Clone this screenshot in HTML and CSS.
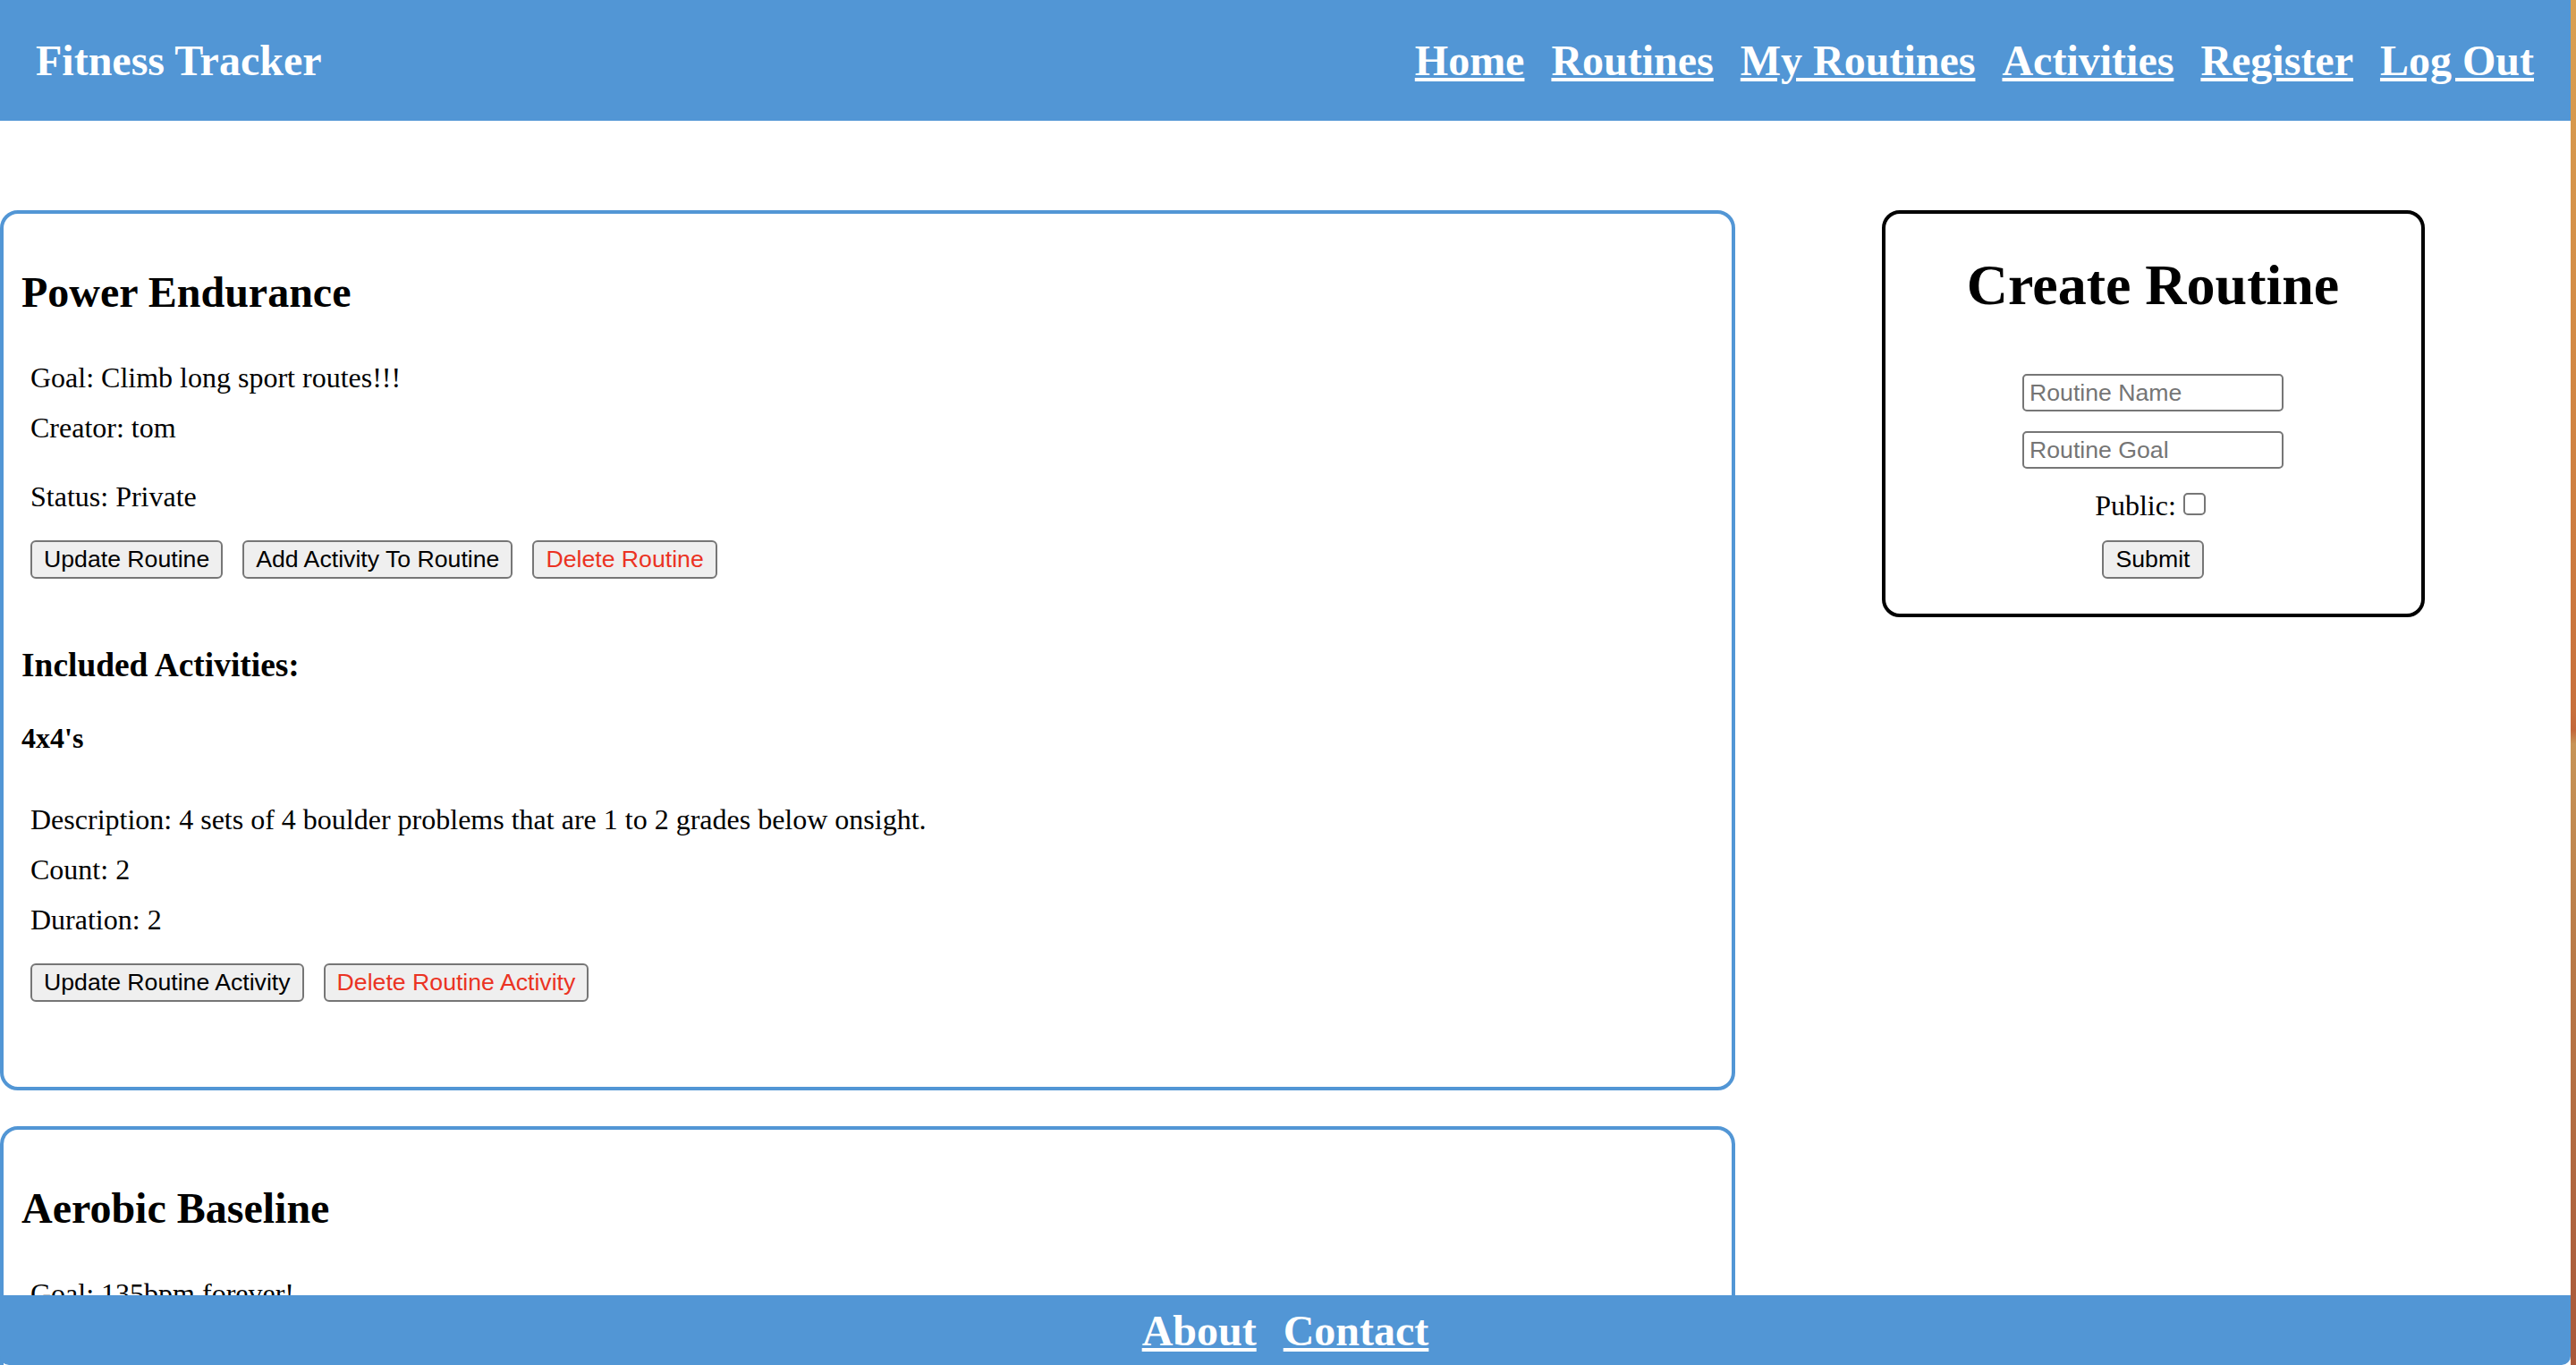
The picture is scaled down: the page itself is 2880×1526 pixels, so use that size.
FILE: index.html
```html
<!DOCTYPE html>
<html lang="en">
<head>
<meta charset="utf-8">
<title>Fitness Tracker</title>
<link rel="stylesheet" href="styles.css">
</head>
<body>
<div class="app">
  <div class="window">
    <header class="topbar">
      <div class="brand">Fitness Tracker</div>
      <nav class="nav">
        <a href="#">Home</a>
        <a href="#">Routines</a>
        <a href="#">My Routines</a>
        <a href="#">Activities</a>
        <a href="#">Register</a>
        <a href="#">Log Out</a>
      </nav>
    </header>

    <main class="main">
      <section class="routines">
        <article class="card">
          <h2 class="card-title">Power Endurance</h2>
          <p class="meta">Goal: Climb long sport routes!!!</p>
          <p class="meta">Creator: tom</p>
          <p class="meta status">Status: Private</p>
          <div class="actions">
            <button class="btn" type="button">Update Routine</button>
            <button class="btn" type="button">Add Activity To Routine</button>
            <button class="btn danger" type="button">Delete Routine</button>
          </div>
          <h3 class="sub">Included Activities:</h3>
          <div class="activity">
            <h4 class="activity-name">4x4's</h4>
            <p class="meta">Description: 4 sets of 4 boulder problems that are 1 to 2 grades below onsight.</p>
            <p class="meta">Count: 2</p>
            <p class="meta">Duration: 2</p>
            <div class="actions">
              <button class="btn" type="button">Update Routine Activity</button>
              <button class="btn danger" type="button">Delete Routine Activity</button>
            </div>
          </div>
        </article>

        <article class="card">
          <h2 class="card-title">Aerobic Baseline</h2>
          <p class="meta">Goal: 135bpm forever!</p>
          <p class="meta">Creator: tom</p>
          <p class="meta status">Status: Public</p>
          <div class="actions">
            <button class="btn" type="button">Update Routine</button>
            <button class="btn" type="button">Add Activity To Routine</button>
            <button class="btn danger" type="button">Delete Routine</button>
          </div>
        </article>
      </section>

      <aside class="side">
        <div class="create">
          <h1 class="create-title">Create Routine</h1>
          <form class="create-form">
            <input class="field" type="text" placeholder="Routine Name">
            <input class="field field-last" type="text" placeholder="Routine Goal">
            <label class="public">Public:<input class="check" type="checkbox"></label>
            <button class="btn submit" type="button">Submit</button>
          </form>
        </div>
      </aside>
    </main>

    <footer class="footer">
      <a href="#">About</a>
      <a href="#">Contact</a>
    </footer>
  </div>
  <div class="desk"></div>
</div>
</body>
</html>
```

FILE: styles.css
```css
html {
  overflow: hidden;
}

body {
  margin: 0;
  font-family: "Liberation Serif", "Times New Roman", serif;
  font-size: 32px;
  color: #000;
  background: #fff;
}

.app {
  display: flex;
  height: 100vh;
}

.window {
  flex: 1;
  min-width: 0;
  position: relative;
  overflow: hidden;
  background: #fff;
}

.desk {
  width: 6px;
  flex: none;
  background: linear-gradient(180deg, #d9a052 0%, #d38a45 25%, #c8703c 52%, #c3673a 53.5%, #c79457 54.5%, #b97a48 70%, #a9583a 100%);
}

/* Header */
.topbar {
  display: flex;
  justify-content: space-between;
  align-items: center;
  height: 135px;
  padding: 0 41px 0 40px;
  background: #5296d5;
}

.brand {
  font-size: 48px;
  font-weight: bold;
  color: #fff;
}

.nav {
  display: flex;
  gap: 30px;
}

.nav a,
.footer a {
  color: #fff;
  font-size: 48px;
  font-weight: bold;
  text-decoration: underline;
}

/* Main */
.main {
  display: grid;
  grid-template-columns: 1940px 1fr;
  align-items: start;
  margin-top: 100px;
}

.card {
  border: 4px solid #5296d5;
  border-radius: 20px;
  padding: 20px;
  margin-bottom: 40px;
}

.card-title {
  font-size: 48px;
  font-weight: bold;
  margin: 40px 0;
}

.meta {
  margin: 0;
  padding-left: 10px;
  line-height: 56px;
}

.status {
  margin-top: 21px;
}

.actions {
  display: flex;
  gap: 22px;
  padding-left: 10px;
  margin: 21px 0 75px;
}

.btn {
  font-family: "Liberation Sans", Arial, sans-serif;
  font-size: 26.67px;
  line-height: normal;
  padding: 4px 13px;
  margin: 0;
  border: 2px solid #767676;
  border-radius: 6px;
  background: #efefef;
  color: #000;
}

.danger {
  color: #eb3323;
}

.sub {
  font-size: 37.44px;
  font-weight: bold;
  margin: 37px 0 42px;
}

.activity-name {
  font-size: 32px;
  font-weight: bold;
  margin: 42px 0 44px;
}

/* Create routine */
.side {
  display: flex;
  justify-content: center;
}

.create {
  box-sizing: border-box;
  width: 607px;
  border: 4px solid #000;
  border-radius: 20px;
  padding: 0 20px 39px;
  text-align: center;
}

.create-title {
  font-size: 64px;
  font-weight: bold;
  margin: 43px 0 62px;
}

.create-form {
  display: flex;
  flex-direction: column;
  align-items: center;
}

.field {
  box-sizing: border-box;
  width: 292px;
  height: 42px;
  margin: 0 0 22px;
  padding: 0 6px;
  border: 2px solid #767676;
  border-radius: 5px;
  font-family: "Liberation Sans", Arial, sans-serif;
  font-size: 26.67px;
  color: #000;
  background: #fff;
}

.field::placeholder {
  color: #757575;
}

.field-last {
  margin-bottom: 23px;
}

.public {
  line-height: 37px;
  margin-bottom: 20px;
}

.check {
  appearance: none;
  -webkit-appearance: none;
  display: inline-block;
  box-sizing: border-box;
  width: 25px;
  height: 25px;
  margin: 0 6px 0 8px;
  border: 2px solid #767676;
  border-radius: 5px;
  background: #fff;
}

.submit {
  padding: 4px 14px;
}

/* Footer */
.footer {
  position: absolute;
  left: 0;
  right: 0;
  bottom: 0;
  height: 78px;
  display: flex;
  justify-content: center;
  align-items: center;
  gap: 30px;
  background: #5296d5;
  border-radius: 0 0 10px 10px;
}
```
